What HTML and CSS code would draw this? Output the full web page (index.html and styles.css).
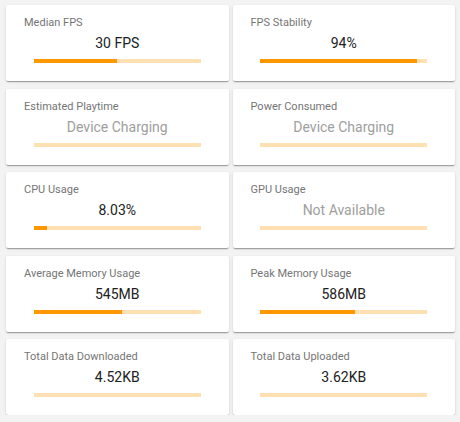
FILE: index.html
```html
<!DOCTYPE html>
<html lang="en">
<head>
    <meta charset="UTF-8">
    <meta name="viewport" content="width=device-width, initial-scale=1.0">
    <title>Session Stats</title>
    <link rel="stylesheet" href="styles.css">
</head>
<body>

    <div class="grid">
        <div class="card">
            <div class="title">Median FPS</div>
            <div class="value">30 FPS</div>
            <div class="bar"><div class="fill" style="width: 50%"></div></div>
        </div>
        <div class="card">
            <div class="title">FPS Stability</div>
            <div class="value">94%</div>
            <div class="bar"><div class="fill" style="width: 94%"></div></div>
        </div>

        <div class="card">
            <div class="title">Estimated Playtime</div>
            <div class="value muted">Device Charging</div>
            <div class="bar"></div>
        </div>
        <div class="card">
            <div class="title">Power Consumed</div>
            <div class="value muted">Device Charging</div>
            <div class="bar"></div>
        </div>

        <div class="card">
            <div class="title">CPU Usage</div>
            <div class="value">8.03%</div>
            <div class="bar"><div class="fill" style="width: 8.03%"></div></div>
        </div>
        <div class="card">
            <div class="title">GPU Usage</div>
            <div class="value muted">Not Available</div>
            <div class="bar"></div>
        </div>

        <div class="card">
            <div class="title">Average Memory Usage</div>
            <div class="value">545MB</div>
            <div class="bar"><div class="fill" style="width: 53%"></div></div>
        </div>
        <div class="card">
            <div class="title">Peak Memory Usage</div>
            <div class="value">586MB</div>
            <div class="bar"><div class="fill" style="width: 57%"></div></div>
        </div>

        <div class="card">
            <div class="title">Total Data Downloaded</div>
            <div class="value">4.52KB</div>
            <div class="bar"></div>
        </div>
        <div class="card">
            <div class="title">Total Data Uploaded</div>
            <div class="value">3.62KB</div>
            <div class="bar"></div>
        </div>
    </div>

</body>
</html>
```

FILE: styles.css
```css
body {
    margin: 0;
    font-family: Roboto, "Liberation Sans", Arial, sans-serif;
    background-color: #f3f3f3;
}

.grid {
    display: grid;
    grid-template-columns: 1fr 1fr;
    column-gap: 4px;
    row-gap: 7.5px;
    padding: 5px 5px 0 6px;
}

.card {
    background-color: #fff;
    border-radius: 2px;
    padding: 11px 0 18px;
    box-shadow: 0 2px 1px -1px rgba(0, 0, 0, 0.2),
                0 1px 1px 0 rgba(0, 0, 0, 0.14),
                0 1px 3px 0 rgba(0, 0, 0, 0.12);
}

.title {
    padding: 0 18px;
    font-size: 11px;
    line-height: 13px;
    color: #757575;
}

.value {
    margin-top: 6px;
    font-size: 14px;
    line-height: 16px;
    color: #212121;
    text-align: center;
}

.value.muted {
    color: #9e9e9e;
}

.bar {
    width: 75%;
    height: 4px;
    margin: 8px auto 0;
    background-color: #ffe0b2;
}

.fill {
    height: 100%;
    background-color: #ff9800;
}
```
